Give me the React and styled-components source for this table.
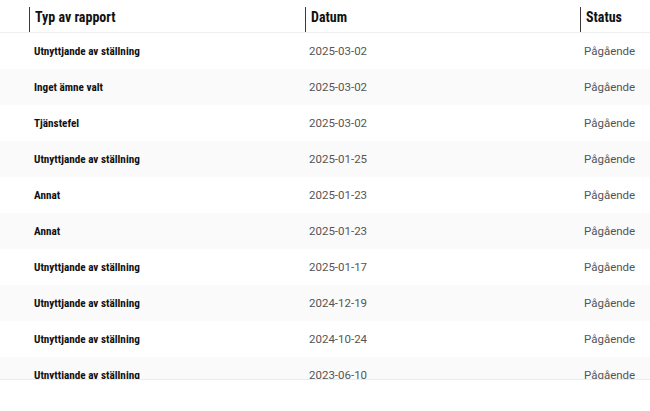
import React from 'react';
import styled, { createGlobalStyle } from 'styled-components';

const GlobalStyle = createGlobalStyle`
  html, body {
    margin: 0;
    padding: 0;
    background: #fff;
  }
  body {
    font-family: Roboto, "Liberation Sans", sans-serif;
    color: #111;
  }
`;

const reports = [
  { type: 'Utnyttjande av ställning', date: '2025-03-02', status: 'Pågående' },
  { type: 'Inget ämne valt', date: '2025-03-02', status: 'Pågående' },
  { type: 'Tjänstefel', date: '2025-03-02', status: 'Pågående' },
  { type: 'Utnyttjande av ställning', date: '2025-01-25', status: 'Pågående' },
  { type: 'Annat', date: '2025-01-23', status: 'Pågående' },
  { type: 'Annat', date: '2025-01-23', status: 'Pågående' },
  { type: 'Utnyttjande av ställning', date: '2025-01-17', status: 'Pågående' },
  { type: 'Utnyttjande av ställning', date: '2024-12-19', status: 'Pågående' },
  { type: 'Utnyttjande av ställning', date: '2024-10-24', status: 'Pågående' },
  { type: 'Utnyttjande av ställning', date: '2023-06-10', status: 'Pågående' },
];

const App = () => {
  return (
    <>
      <GlobalStyle />
      <TableBox>
        <HeaderRow>
          <span />
          <HeadCell>Typ av rapport</HeadCell>
          <HeadCell>Datum</HeadCell>
          <HeadCell>Status</HeadCell>
        </HeaderRow>
        {reports.map((r, i) => (
          <BodyRow key={i} $striped={i % 2 === 1}>
            <span />
            <TypeCell>{r.type}</TypeCell>
            <TextCell>{r.date}</TextCell>
            <TextCell>{r.status}</TextCell>
          </BodyRow>
        ))}
      </TableBox>
    </>
  );
};

export default App;

const columns = '29px 276px 275px 1fr';

const TableBox = styled.div`
  width: 650px;
  height: 379px;
  overflow: hidden;
  border-bottom: 1px solid #ececec;
`;

const HeaderRow = styled.div`
  display: grid;
  grid-template-columns: ${columns};
  height: 33px;
  border-bottom: 1px solid #f0f0f0;
  box-sizing: border-box;
  align-items: end;
`;

const HeadCell = styled.div`
  display: flex;
  align-items: center;
  height: 25px;
  padding-left: 5px;
  padding-bottom: 5px;
  box-sizing: border-box;
  border-left: 1.5px solid #3a3a3a;
  font-stretch: condensed;
  font-size: 14px;
  font-weight: 700;
  color: #111;
`;

const BodyRow = styled.div`
  display: grid;
  grid-template-columns: ${columns};
  align-items: center;
  height: 36px;
  background-color: ${(p) => (p.$striped ? '#fafafa' : '#fff')};
`;

const TypeCell = styled.div`
  padding-left: 5px;
  font-stretch: condensed;
  font-size: 11.2px;
  font-weight: 700;
  color: #111;
`;

const TextCell = styled.div`
  padding-left: 4px;
  font-size: 11.5px;
  color: #555;
`;
